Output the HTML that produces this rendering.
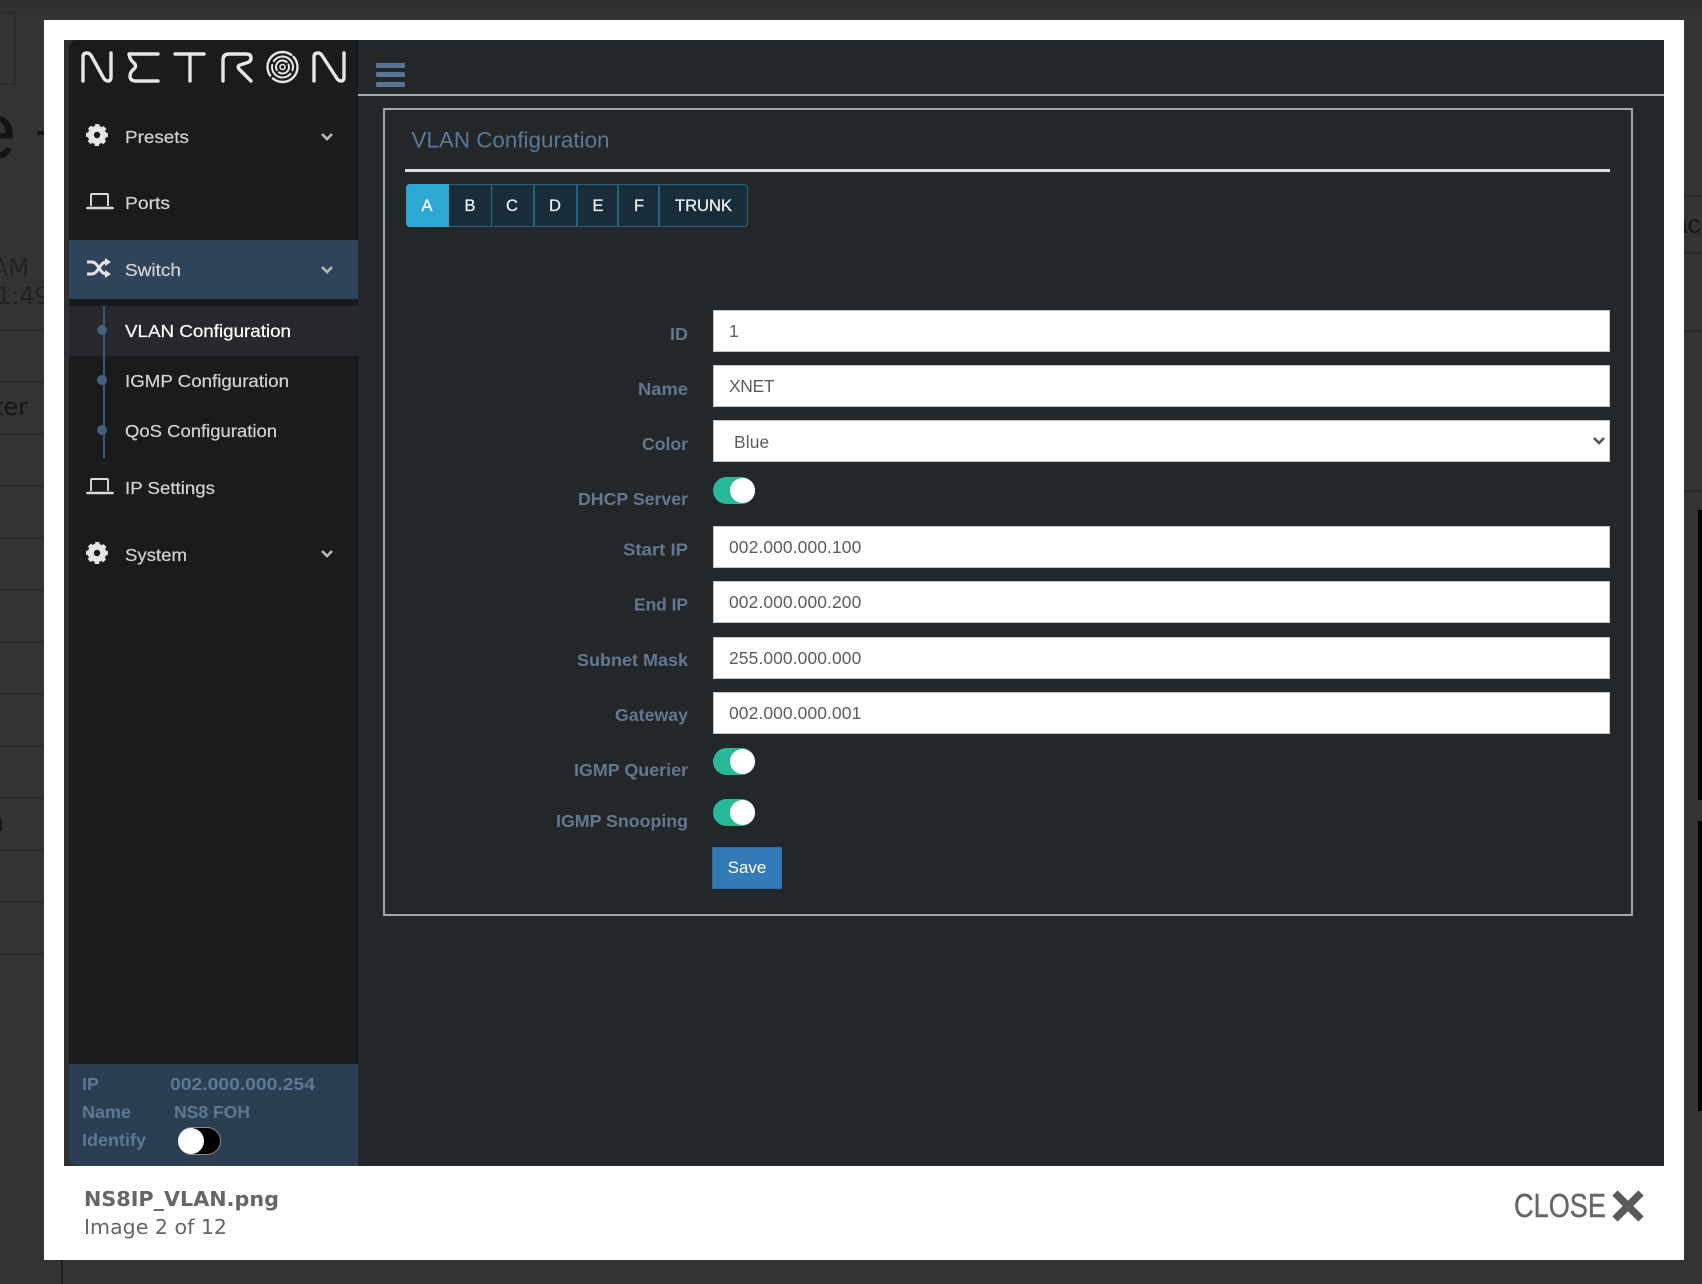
<!DOCTYPE html>
<html lang="en">
<head>
<meta charset="utf-8">
<title>NS8IP_VLAN.png</title>
<style>
html,body{margin:0;padding:0;background:#333;}
body{position:relative;width:1702px;height:1284px;overflow:hidden;font-family:"Liberation Sans",sans-serif;}
.a{position:absolute;box-sizing:border-box;}
.ln{position:absolute;height:2px;background:#2a2a2a;}
input.f,select.f{position:absolute;left:713px;width:897px;height:42px;box-sizing:border-box;background:#fff;border:1px solid #c4c4c4;border-radius:0;padding:0 0 0 15px;margin:0;font:17.4px "Liberation Sans",sans-serif;letter-spacing:.12px;color:#5c5c5c;outline:0;appearance:none;-webkit-appearance:none;}
select.f{padding-left:20px;padding-top:2px;}
.tg{position:absolute;left:713px;width:42px;height:27px;border-radius:14px;background:#26b99a;}
.tg i{position:absolute;right:0;top:1px;width:25px;height:25px;border-radius:50%;background:#fff;box-shadow:0 0 1px #888;}
svg text{font-family:"Liberation Sans",sans-serif;}
.nav{font-size:17.4px;fill:#d2d2d2;stroke:#d2d2d2;stroke-width:.22px;}
.lb{font-size:17.4px;font-weight:bold;fill:#627890;}
.sb{font-size:17.4px;font-weight:bold;fill:#5c7894;}
.bt{font-size:16.5px;fill:#e8eef0;stroke:#e8eef0;stroke-width:.3px;text-anchor:middle;}
</style>
</head>
<body>
<!-- dim page beneath overlay -->
<div class="a" style="left:0;top:0;width:1702px;height:20px;background:linear-gradient(#2f2f2f,#343434)"></div>
<div class="a" style="left:-4px;top:12px;width:20px;height:73px;border:2px solid #2c2c2c"></div>
<div class="ln" style="left:0;top:329px;width:44px"></div>
<div class="ln" style="left:0;top:381px;width:44px"></div>
<div class="ln" style="left:0;top:433px;width:44px"></div>
<div class="ln" style="left:0;top:485px;width:44px"></div>
<div class="ln" style="left:0;top:537px;width:44px"></div>
<div class="ln" style="left:0;top:589px;width:44px"></div>
<div class="ln" style="left:0;top:641px;width:44px"></div>
<div class="ln" style="left:0;top:693px;width:44px"></div>
<div class="ln" style="left:0;top:745px;width:44px"></div>
<div class="ln" style="left:0;top:797px;width:44px"></div>
<div class="ln" style="left:0;top:849px;width:44px"></div>
<div class="ln" style="left:0;top:901px;width:44px"></div>
<div class="ln" style="left:0;top:953px;width:44px"></div>
<div class="ln" style="left:1684px;top:195px;width:18px"></div>
<div class="ln" style="left:1684px;top:252px;width:18px"></div>
<div class="ln" style="left:1684px;top:330px;width:18px"></div>
<div class="ln" style="left:1684px;top:490px;width:18px"></div>
<div class="a" style="left:1698px;top:510px;width:4px;height:290px;background:#000"></div>
<div class="a" style="left:1698px;top:821px;width:4px;height:290px;background:#000"></div>
<div class="a" style="left:61px;top:1260px;width:2px;height:24px;background:#1e1e1e"></div>

<svg class="a" style="left:0;top:0" width="44" height="1284">
  <text x="-28" y="158" font-size="80" fill="#151515">e</text>
  <rect x="37" y="131" width="7" height="4" fill="#151515"/>
  <text x="-8" y="276" font-size="24" fill="#222" style="font-family:'DejaVu Sans',sans-serif">AM</text>
  <text x="-4" y="304" font-size="24" fill="#222" style="font-family:'DejaVu Sans',sans-serif">1:49</text>
  <text x="-6" y="415" font-size="24" fill="#161616" style="font-family:'DejaVu Sans',sans-serif">ter</text>
  <text x="-11" y="831" font-size="26" fill="#161616">n</text>
</svg>
<svg class="a" style="left:1684px;top:0" width="18" height="300">
  <text x="-11" y="233" font-size="26" fill="#161616">ach</text>
</svg>

<!-- modal -->
<div class="a" style="left:44px;top:20px;width:1640px;height:1240px;background:#fff"></div>
<div class="a" style="left:64px;top:40px;width:1600px;height:1126px;background:#23272a"></div>
<div class="a" style="left:64px;top:40px;width:294px;height:1126px;background:#2d2f31"></div>
<div class="a" style="left:69px;top:40px;width:289px;height:1126px;background:#191b1d;border-radius:8px 0 0 8px"></div>

<!-- sidebar bands -->
<div class="a" style="left:69px;top:240px;width:289px;height:59px;background:#2f445a"></div>
<div class="a" style="left:69px;top:306px;width:289px;height:50px;background:#26282b"></div>
<div class="a" style="left:69px;top:1064px;width:289px;height:102px;background:#2c3e52;border-radius:0 0 0 8px"></div>
<div class="a" style="left:102.5px;top:306px;width:2px;height:152px;background:#3f5871"></div>
<div class="a" style="left:97px;top:325px;width:10px;height:10px;border-radius:50%;background:#43607c"></div>
<div class="a" style="left:97px;top:375px;width:10px;height:10px;border-radius:50%;background:#43607c"></div>
<div class="a" style="left:97px;top:425px;width:10px;height:10px;border-radius:50%;background:#43607c"></div>

<!-- top bar & panel -->
<div class="a" style="left:358px;top:94px;width:1306px;height:2px;background:#a9acae"></div>
<div class="a" style="left:383px;top:108px;width:1250px;height:808px;border:2px solid #a3a5a7"></div>
<div class="a" style="left:405px;top:169px;width:1205px;height:3px;background:#dcdedf"></div>
<div class="a" style="left:376px;top:63px;width:29px;height:5px;background:#557496;border-radius:1px"></div>
<div class="a" style="left:376px;top:72px;width:29px;height:5px;background:#557496;border-radius:1px"></div>
<div class="a" style="left:376px;top:82px;width:29px;height:5px;background:#557496;border-radius:1px"></div>

<!-- button group -->
<div class="a" style="left:406px;top:184px;width:342px;height:43px;background:#182d37;border:1px solid #24637c;border-radius:4px"></div>
<div class="a" style="left:406px;top:184px;width:43px;height:43px;background:#2ba9d3;border-radius:4px 0 0 4px"></div>
<div class="a" style="left:491px;top:185px;width:1px;height:41px;background:#2a6f8b"></div>
<div class="a" style="left:533px;top:185px;width:2px;height:41px;background:#24637c"></div>
<div class="a" style="left:576px;top:185px;width:2px;height:41px;background:#24637c"></div>
<div class="a" style="left:617px;top:185px;width:2px;height:41px;background:#24637c"></div>
<div class="a" style="left:658px;top:185px;width:2px;height:41px;background:#24637c"></div>

<!-- fields -->
<input class="f" style="top:310px" value="1" readonly>
<input class="f" style="top:365px;letter-spacing:-.3px" value="XNET" readonly>
<select class="f" style="top:420px"><option>Blue</option></select>
<div class="tg" style="top:477px"><i></i></div>
<input class="f" style="top:526px" value="002.000.000.100" readonly>
<input class="f" style="top:581px" value="002.000.000.200" readonly>
<input class="f" style="top:637px" value="255.000.000.000" readonly>
<input class="f" style="top:692px" value="002.000.000.001" readonly>
<div class="tg" style="top:748px"><i></i></div>
<div class="tg" style="top:799px"><i></i></div>
<div class="a" style="left:712px;top:847px;width:70px;height:42px;background:#337ab7;border:1px solid #2e6da4;color:#fff;font-size:17px;line-height:40px;text-align:center">Save</div>

<!-- identify toggle -->
<div class="a" style="left:178px;top:1127px;width:43px;height:28px;border-radius:14px;background:#000;border:1px solid #8a8a8a"></div>
<div class="a" style="left:178px;top:1128px;width:26px;height:26px;border-radius:50%;background:#fff"></div>

<!-- overlay for text and icons -->
<svg class="a" style="left:0;top:0" width="1702" height="1284" viewBox="0 0 1702 1284">
  <!-- logo -->
  <g fill="none" stroke="#e6e6e6" stroke-width="3.4" stroke-linecap="round" stroke-linejoin="round">
    <path d="M83 81V57Q83 53 87 53Q90 53 92 57L103 77Q105 81 108 81Q111 81 111 77V53"/>
    <path d="M158 54H129Q130 60 134 63Q137 66 134 69Q130 72 130 76Q130 81 136 81H158"/>
    <path d="M175 54H204M190 54V81"/>
    <path d="M223 81V60Q223 54 229 54H246Q251 54 251 58Q251 62 246 63L240 65Q237 66 239 69L251 81"/>
    <circle cx="282.5" cy="67" r="15" stroke-dasharray="34 4 42 3" stroke-width="2.4"/>
    <circle cx="282.5" cy="67" r="10.5" stroke-width="2" stroke-dasharray="24 4 30 4" transform="rotate(60 282.5 67)"/>
    <circle cx="282.5" cy="67" r="6.5" stroke-width="2" stroke-dasharray="14 3 18 3"/>
    <circle cx="282.5" cy="67" r="2.5" stroke-width="1.6"/>
    <path d="M314 81V57Q314 53 318 53Q321 53 323 57L336 77Q338 81 341 81Q344 81 344 77V53"/>
  </g>

  <!-- gears -->
  <g>
    <g transform="translate(97 135)">
      <circle r="6.2" fill="none" stroke="#e6e6e6" stroke-width="6"/>
      <circle r="9.5" fill="none" stroke="#e6e6e6" stroke-width="3" stroke-dasharray="4.2 3.26" transform="rotate(-12.7)"/>
    </g>
    <g transform="translate(97 553)">
      <circle r="6.2" fill="none" stroke="#e6e6e6" stroke-width="6"/>
      <circle r="9.5" fill="none" stroke="#e6e6e6" stroke-width="3" stroke-dasharray="4.2 3.26" transform="rotate(-12.7)"/>
    </g>
  </g>

  <!-- laptops -->
  <g fill="none" stroke="#dcdcdc" stroke-width="1.9" stroke-linejoin="round">
    <path d="M91 206V195Q91 194 92 194H107Q108 194 108 195V206"/>
    <path d="M87.5 208H112.5" stroke-width="2.6" stroke-linecap="round"/>
    <path d="M91 491V480Q91 479 92 479H107Q108 479 108 480V491"/>
    <path d="M87.5 493H112.5" stroke-width="2.6" stroke-linecap="round"/>
  </g>

  <!-- shuffle -->
  <g fill="none" stroke="#e4e4e4" stroke-width="3">
    <path d="M87 262H92C98 262 100 274 106 274H107M87 274H92C98 274 100 262 106 262H107"/>
  </g>
  <path d="M105 258L111 262L105 266ZM105 270L111 274L105 278Z" fill="#e4e4e4"/>

  <!-- chevrons -->
  <g fill="none" stroke="#b9b9b9" stroke-width="2.6">
    <path d="M322 134L327 139L332 134"/>
    <path d="M322 267L327 272L332 267"/>
    <path d="M322 551L327 556L332 551"/>
  </g>
  <path d="M1594 438L1599 443L1604 438" fill="none" stroke="#555" stroke-width="2.6"/>

  <!-- nav -->
  <text class="nav" x="125" y="143" textLength="64" lengthAdjust="spacingAndGlyphs">Presets</text>
  <text class="nav" x="125" y="209" textLength="45" lengthAdjust="spacingAndGlyphs">Ports</text>
  <text class="nav" x="125" y="276" textLength="56" lengthAdjust="spacingAndGlyphs">Switch</text>
  <text class="nav" x="125" y="337" textLength="166" lengthAdjust="spacingAndGlyphs" style="fill:#fff;stroke:#fff">VLAN Configuration</text>
  <text class="nav" x="125" y="387" textLength="164" lengthAdjust="spacingAndGlyphs">IGMP Configuration</text>
  <text class="nav" x="125" y="437" textLength="152" lengthAdjust="spacingAndGlyphs">QoS Configuration</text>
  <text class="nav" x="125" y="494" textLength="90" lengthAdjust="spacingAndGlyphs">IP Settings</text>
  <text class="nav" x="125" y="561" textLength="62" lengthAdjust="spacingAndGlyphs">System</text>

  <!-- panel title -->
  <text x="411.5" y="147.5" font-size="22" fill="#5d7896" textLength="198" lengthAdjust="spacingAndGlyphs">VLAN Configuration</text>

  <!-- group buttons -->
  <text class="bt" x="427" y="211" style="fill:#fff;stroke:#fff">A</text>
  <text class="bt" x="470" y="211">B</text>
  <text class="bt" x="512" y="211">C</text>
  <text class="bt" x="555" y="211">D</text>
  <text class="bt" x="598" y="211">E</text>
  <text class="bt" x="639" y="211">F</text>
  <text class="bt" x="675" y="211" textLength="57" lengthAdjust="spacingAndGlyphs" style="text-anchor:start">TRUNK</text>

  <!-- labels -->
  <text class="lb" x="670" y="340" textLength="18" lengthAdjust="spacingAndGlyphs">ID</text>
  <text class="lb" x="638" y="395" textLength="50" lengthAdjust="spacingAndGlyphs">Name</text>
  <text class="lb" x="642" y="450" textLength="46" lengthAdjust="spacingAndGlyphs">Color</text>
  <text class="lb" x="578" y="505" textLength="110" lengthAdjust="spacingAndGlyphs">DHCP Server</text>
  <text class="lb" x="623" y="555.5" textLength="65" lengthAdjust="spacingAndGlyphs">Start IP</text>
  <text class="lb" x="634" y="610.5" textLength="54" lengthAdjust="spacingAndGlyphs">End IP</text>
  <text class="lb" x="577" y="666" textLength="111" lengthAdjust="spacingAndGlyphs">Subnet Mask</text>
  <text class="lb" x="615" y="721" textLength="73" lengthAdjust="spacingAndGlyphs">Gateway</text>
  <text class="lb" x="574" y="776" textLength="114" lengthAdjust="spacingAndGlyphs">IGMP Querier</text>
  <text class="lb" x="556" y="827" textLength="132" lengthAdjust="spacingAndGlyphs">IGMP Snooping</text>

  <!-- sidebar footer -->
  <text class="sb" x="82" y="1090" textLength="17" lengthAdjust="spacingAndGlyphs">IP</text>
  <text class="sb" x="170" y="1090" textLength="145" lengthAdjust="spacingAndGlyphs">002.000.000.254</text>
  <text class="sb" x="82" y="1118" textLength="49" lengthAdjust="spacingAndGlyphs">Name</text>
  <text class="sb" x="174" y="1118" textLength="76" lengthAdjust="spacingAndGlyphs">NS8 FOH</text>
  <text class="sb" x="82" y="1146" textLength="64" lengthAdjust="spacingAndGlyphs">Identify</text>

  <!-- caption -->
  <text x="84" y="1206" font-size="20" font-weight="bold" fill="#666" style="font-family:'DejaVu Sans',sans-serif" textLength="195" lengthAdjust="spacingAndGlyphs">NS8IP_VLAN.png</text>
  <text x="84" y="1234" font-size="20" fill="#666" style="font-family:'DejaVu Sans',sans-serif" textLength="143" lengthAdjust="spacingAndGlyphs">Image 2 of 12</text>

  <!-- close -->
  <text x="1514" y="1217" font-size="33" fill="#666" stroke="#666" stroke-width=".4" textLength="92" lengthAdjust="spacingAndGlyphs">CLOSE</text>
  <path d="M1615 1193L1641 1219M1641 1193L1615 1219" stroke="#5a5a5a" stroke-width="7.5" fill="none"/>
</svg>
</body>
</html>
